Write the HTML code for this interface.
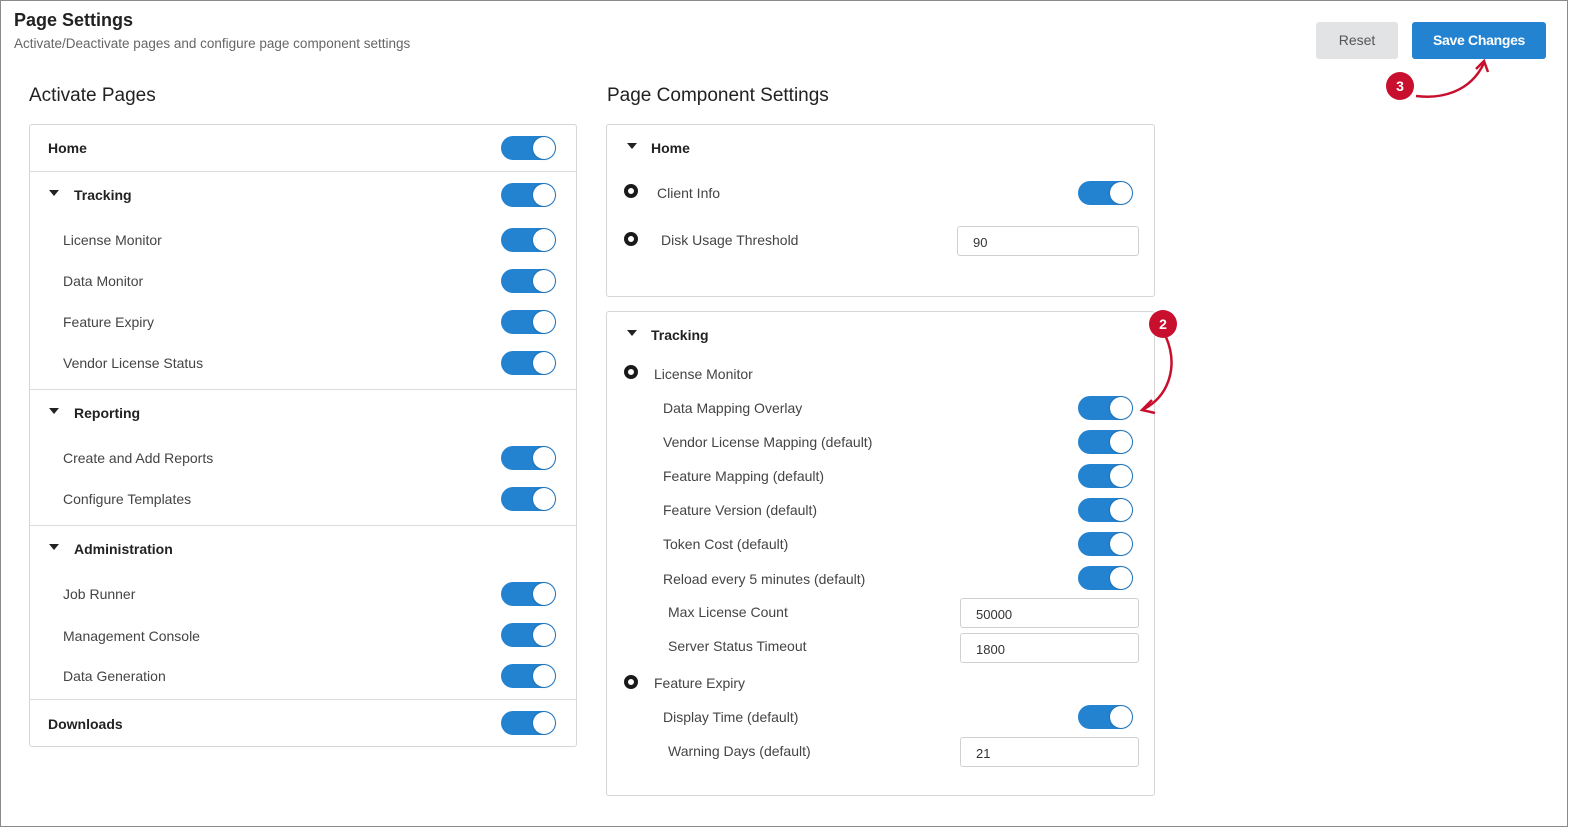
<!DOCTYPE html>
<html><head><meta charset="utf-8"><style>
*{box-sizing:border-box;margin:0;padding:0}
body{width:1582px;height:834px;background:#fff;font-family:"Liberation Sans",sans-serif;color:#333;position:relative;overflow:hidden}
.frame{position:absolute;left:0;top:0;width:1568px;height:827px;border:1px solid #8a8a8a}
.a{position:absolute;white-space:nowrap}
.t{font-size:14px;color:#444}
.b{font-size:14px;font-weight:bold;color:#222}
.tg{position:absolute;width:55px;height:24px;border-radius:12px;background:#2383d1}
.tg::after{content:"";position:absolute;right:1px;top:1px;width:22px;height:22px;border-radius:50%;background:#fff;box-shadow:0 0 2px rgba(0,0,0,.35)}
.panel{position:absolute;border:1px solid #d6d6d6;border-radius:3px;background:#fff}
.hr{position:absolute;left:30px;width:546px;height:1px;background:#dcdcdc}
.car{position:absolute;width:0;height:0;border-left:5px solid transparent;border-right:5px solid transparent;border-top:6px solid #222}
.rad{position:absolute;width:14px;height:14px;border-radius:50%;border:4px solid #1a1a1a;background:#fff}
.in{position:absolute;height:30px;border:1px solid #d0d0d0;border-radius:3px;font-size:13px;color:#333;padding:8px 15px}
</style></head><body>
<div class="frame"></div>
<div class="a" style="left:14px;top:10px;font-size:18px;font-weight:bold;color:#222">Page Settings</div>
<div class="a" style="left:14px;top:36px;font-size:13.5px;color:#666">Activate/Deactivate pages and configure page component settings</div>
<div class="a" style="left:1316px;top:22px;width:82px;height:37px;background:#e2e3e5;border-radius:3px;font-size:14px;color:#555;text-align:center;line-height:37px">Reset</div>
<div class="a" style="left:1412px;top:22px;width:134px;height:37px;background:#2383d1;border-radius:3px;font-size:14px;font-weight:bold;color:#fff;text-align:center;line-height:37px;letter-spacing:-.3px">Save Changes</div>
<svg class="a" style="left:1380px;top:55px" width="130" height="50"><path d="M36 41 C60 44 90 38 104 8" stroke="#c8102e" stroke-width="2.5" fill="none"/><path d="M96 14 L104 6 L108 17" stroke="#c8102e" stroke-width="2.5" fill="none"/><circle cx="20" cy="31" r="14" fill="#c8102e"/><text x="20" y="36" font-size="14" font-weight="bold" fill="#fff" text-anchor="middle" font-family="Liberation Sans">3</text></svg>

<div class="a" style="left:29px;top:85px;font-size:19px;color:#222">Activate Pages</div>
<div class="a" style="left:607px;top:85px;font-size:19px;color:#222">Page Component Settings</div>

<div class="panel" style="left:29px;top:124px;width:548px;height:623px"></div>
<div class="hr" style="top:171px"></div><div class="hr" style="top:389px"></div><div class="hr" style="top:525px"></div><div class="hr" style="top:699px"></div>
<div class="a b" style="left:48px;top:140px">Home</div><div class="tg" style="left:501px;top:136px"></div>
<div class="car" style="left:49px;top:190px"></div><div class="a b" style="left:74px;top:187px">Tracking</div><div class="tg" style="left:501px;top:183px"></div>
<div class="a t" style="left:63px;top:232px">License Monitor</div><div class="tg" style="left:501px;top:228px"></div>
<div class="a t" style="left:63px;top:273px">Data Monitor</div><div class="tg" style="left:501px;top:269px"></div>
<div class="a t" style="left:63px;top:314px">Feature Expiry</div><div class="tg" style="left:501px;top:310px"></div>
<div class="a t" style="left:63px;top:355px">Vendor License Status</div><div class="tg" style="left:501px;top:351px"></div>
<div class="car" style="left:49px;top:408px"></div><div class="a b" style="left:74px;top:405px">Reporting</div>
<div class="a t" style="left:63px;top:450px">Create and Add Reports</div><div class="tg" style="left:501px;top:446px"></div>
<div class="a t" style="left:63px;top:491px">Configure Templates</div><div class="tg" style="left:501px;top:487px"></div>
<div class="car" style="left:49px;top:544px"></div><div class="a b" style="left:74px;top:541px">Administration</div>
<div class="a t" style="left:63px;top:586px">Job Runner</div><div class="tg" style="left:501px;top:582px"></div>
<div class="a t" style="left:63px;top:628px">Management Console</div><div class="tg" style="left:501px;top:623px"></div>
<div class="a t" style="left:63px;top:668px">Data Generation</div><div class="tg" style="left:501px;top:664px"></div>
<div class="a b" style="left:48px;top:716px">Downloads</div><div class="tg" style="left:501px;top:711px"></div>

<div class="panel" style="left:606px;top:124px;width:549px;height:173px"></div>
<div class="car" style="left:627px;top:143px"></div><div class="a b" style="left:651px;top:140px">Home</div>
<div class="rad" style="left:624px;top:184px"></div><div class="a t" style="left:657px;top:185px">Client Info</div><div class="tg" style="left:1078px;top:181px"></div>
<div class="rad" style="left:624px;top:232px"></div><div class="a t" style="left:661px;top:232px">Disk Usage Threshold</div><div class="in" style="left:957px;top:226px;width:182px">90</div>

<div class="panel" style="left:606px;top:311px;width:549px;height:485px"></div>
<div class="car" style="left:627px;top:330px"></div><div class="a b" style="left:651px;top:327px">Tracking</div>
<div class="rad" style="left:624px;top:365px"></div><div class="a t" style="left:654px;top:366px">License Monitor</div>
<div class="a t" style="left:663px;top:400px">Data Mapping Overlay</div><div class="tg" style="left:1078px;top:396px"></div>
<div class="a t" style="left:663px;top:434px">Vendor License Mapping (default)</div><div class="tg" style="left:1078px;top:430px"></div>
<div class="a t" style="left:663px;top:468px">Feature Mapping (default)</div><div class="tg" style="left:1078px;top:464px"></div>
<div class="a t" style="left:663px;top:502px">Feature Version (default)</div><div class="tg" style="left:1078px;top:498px"></div>
<div class="a t" style="left:663px;top:536px">Token Cost (default)</div><div class="tg" style="left:1078px;top:532px"></div>
<div class="a t" style="left:663px;top:571px">Reload every 5 minutes (default)</div><div class="tg" style="left:1078px;top:566px"></div>
<div class="a t" style="left:668px;top:604px">Max License Count</div><div class="in" style="left:960px;top:598px;width:179px">50000</div>
<div class="a t" style="left:668px;top:638px">Server Status Timeout</div><div class="in" style="left:960px;top:633px;width:179px">1800</div>
<div class="rad" style="left:624px;top:675px"></div><div class="a t" style="left:654px;top:675px">Feature Expiry</div>
<div class="a t" style="left:663px;top:709px">Display Time (default)</div><div class="tg" style="left:1078px;top:705px"></div>
<div class="a t" style="left:668px;top:743px">Warning Days (default)</div><div class="in" style="left:960px;top:737px;width:179px">21</div>

<svg class="a" style="left:1130px;top:305px" width="60" height="115"><path d="M36 32 C48 60 40 90 14 104" stroke="#c8102e" stroke-width="2.5" fill="none"/><path d="M22 95 L12 105 L25 108" stroke="#c8102e" stroke-width="2.5" fill="none"/><circle cx="33" cy="19" r="14" fill="#c8102e"/><text x="33" y="24" font-size="14" font-weight="bold" fill="#fff" text-anchor="middle" font-family="Liberation Sans">2</text></svg>
</body></html>
